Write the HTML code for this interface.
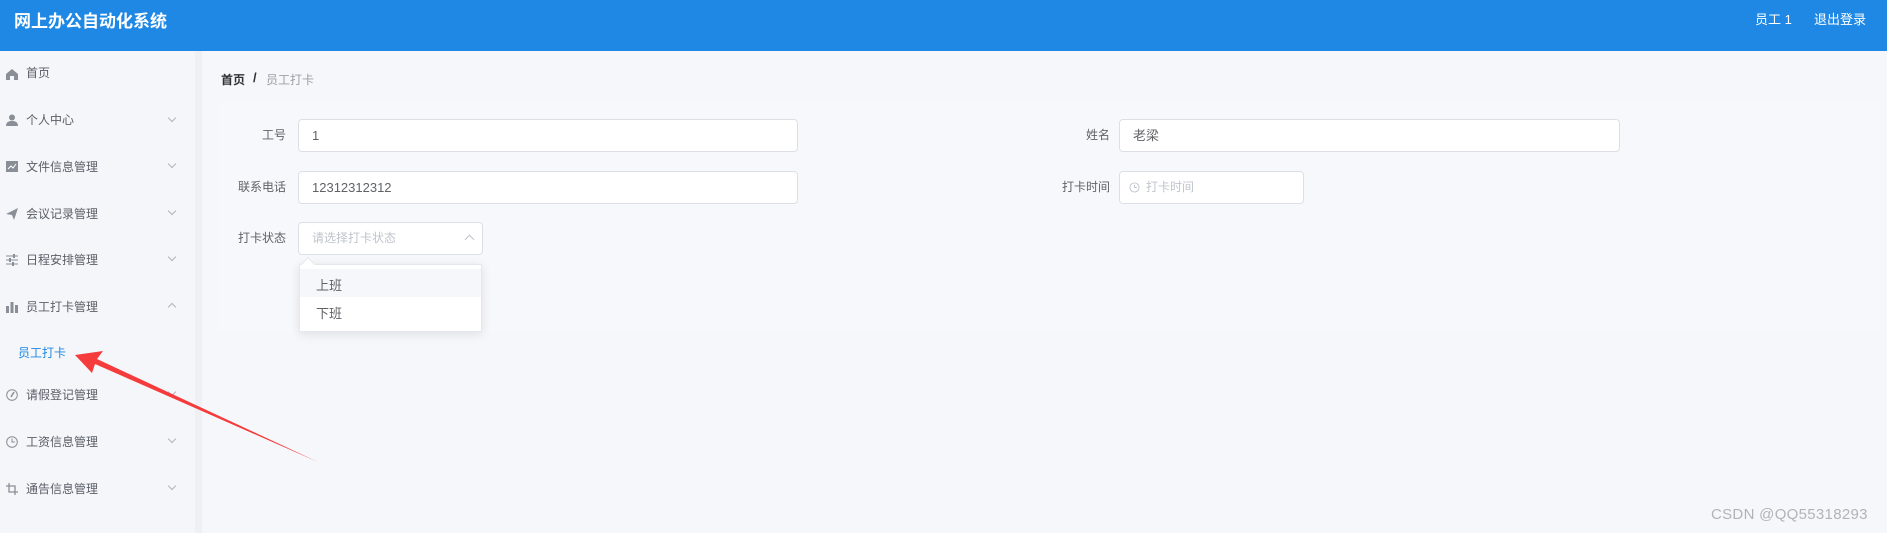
<!DOCTYPE html>
<html><head><meta charset="utf-8"><style>
*{margin:0;padding:0;box-sizing:border-box}
body{width:1887px;height:533px;overflow:hidden;background:#f6f7fb;font-family:"Liberation Sans","Noto Sans CJK SC",sans-serif;position:relative;color:#606266}
.hd{position:absolute;left:0;top:0;width:1887px;height:51px;background:#1e88e4}
.t{position:absolute;left:14px;top:7px;font-size:17px;font-weight:bold;color:#fff}
.hr{position:absolute;top:8px;color:#fff;font-size:13px}
.sb{position:absolute;left:0;top:51px;width:195px;height:482px;background:#f4f6fa}
.sg{position:absolute;left:195px;top:51px;width:7px;height:482px;background:#eef0f3}
.mi{position:absolute;left:26px;font-size:12px;color:#5a5e66;line-height:16px}
.ic{position:absolute;left:6px;width:12px;height:12px}
.ch{position:absolute;left:169px;width:6px;height:6px;border-right:1px solid #b0b4bb;border-bottom:1px solid #b0b4bb;transform:rotate(45deg)}
.lb{position:absolute;font-size:12px;color:#606266;text-align:right;width:80px}
.in{position:absolute;background:#fff;border:1px solid #dcdfe6;border-radius:4px;height:33px;font-size:13px;color:#606266;padding-left:13px;line-height:31px}
</style></head><body>
<div class="hd"></div>
<div class="t">网上办公自动化系统</div>
<div class="hr" style="left:1755px;top:9px">员工 1</div>
<div class="hr" style="left:1814px;top:9px">退出登录</div>
<div class="sb"></div><div class="sg"></div>
<svg class="ic" style="top:68px" viewBox="0 0 12 12"><path d="M0 6L6 1L12 6V12H8V8H4V12H0Z" fill="#8a8e96"/></svg>
<div class="mi" style="top:65px">首页</div>
<svg class="ic" style="top:114px" viewBox="0 0 12 12"><circle cx="6" cy="3.5" r="3" fill="#8a8e96"/><path d="M0 12C0 8 3 7 6 7S12 8 12 12Z" fill="#8a8e96"/></svg>
<div class="mi" style="top:112px">个人中心</div><div class="ch" style="top:115px"></div>
<svg class="ic" style="top:161px" viewBox="0 0 12 12"><rect width="12" height="11" fill="#8a8e96"/><path d="M2 8L5 5L7 7L10 3" stroke="#fff" fill="none"/></svg>
<div class="mi" style="top:159px">文件信息管理</div><div class="ch" style="top:161px"></div>
<svg class="ic" style="top:208px" viewBox="0 0 12 12"><path d="M0 6L12 0L8 12L6 7Z" fill="#8a8e96"/></svg>
<div class="mi" style="top:206px">会议记录管理</div><div class="ch" style="top:208px"></div>
<svg class="ic" style="top:254px" viewBox="0 0 12 12"><path d="M0 2H12M0 6H12M0 10H12" stroke="#8a8e96"/><rect x="7" y="0" width="2" height="4" fill="#8a8e96"/><rect x="3" y="4" width="2" height="4" fill="#8a8e96"/><rect x="6" y="8" width="2" height="4" fill="#8a8e96"/></svg>
<div class="mi" style="top:252px">日程安排管理</div><div class="ch" style="top:254px"></div>
<svg class="ic" style="top:301px" viewBox="0 0 12 12"><rect x="0" y="5" width="3" height="7" fill="#8a8e96"/><rect x="4.5" y="1" width="3" height="11" fill="#8a8e96"/><rect x="9" y="4" width="3" height="8" fill="#8a8e96"/></svg>
<div class="mi" style="top:299px">员工打卡管理</div><div class="ch" style="top:304px;transform:rotate(225deg)"></div>
<div class="mi" style="top:345px;left:18px;color:#1e88e4">员工打卡</div>
<svg class="ic" style="top:389px" viewBox="0 0 12 12"><circle cx="6" cy="6" r="5.3" stroke="#8a8e96" fill="none"/><path d="M8 3L5 8" stroke="#8a8e96" stroke-width="1.5"/></svg>
<div class="mi" style="top:387px">请假登记管理</div><div class="ch" style="top:389px"></div>
<svg class="ic" style="top:436px" viewBox="0 0 12 12"><circle cx="6" cy="6" r="5.3" stroke="#8a8e96" fill="none"/><path d="M6 2.5V6H9" stroke="#8a8e96" fill="none"/></svg>
<div class="mi" style="top:434px">工资信息管理</div><div class="ch" style="top:436px"></div>
<svg class="ic" style="top:483px" viewBox="0 0 12 12"><path d="M3 0V9H12M0 3H9V12" stroke="#8a8e96" fill="none" stroke-width="1.3"/></svg>
<div class="mi" style="top:481px">通告信息管理</div><div class="ch" style="top:483px"></div>
<div style="position:absolute;left:221px;top:71px;font-size:12px;color:#303133;font-weight:bold">首页</div>
<div style="position:absolute;left:253px;top:70px;font-size:13px;color:#303133;font-weight:bold">/</div>
<div style="position:absolute;left:266px;top:71px;font-size:12px;color:#9aa0a8">员工打卡</div>
<div style="position:absolute;left:219px;top:102px;width:1660px;height:230px;background:#f7f8fb"></div>
<div class="lb" style="left:206px;top:126px">工号</div>
<div class="in" style="left:298px;top:119px;width:500px">1</div>
<div class="lb" style="left:1030px;top:126px">姓名</div>
<div class="in" style="left:1119px;top:119px;width:501px">老梁</div>
<div class="lb" style="left:206px;top:178px">联系电话</div>
<div class="in" style="left:298px;top:171px;width:500px">12312312312</div>
<div class="lb" style="left:1030px;top:178px">打卡时间</div>
<div class="in" style="left:1119px;top:171px;width:185px;color:#c0c4cc;padding-left:26px;font-size:12px">打卡时间</div>
<svg style="position:absolute;left:1129px;top:182px" width="11" height="11" viewBox="0 0 12 12"><circle cx="6" cy="6" r="5" stroke="#c0c4cc" fill="none"/><path d="M6 3V6H8.5" stroke="#c0c4cc" fill="none"/></svg>
<div class="lb" style="left:206px;top:229px">打卡状态</div>
<div class="in" style="left:298px;top:222px;width:185px;color:#c0c4cc;font-size:12px">请选择打卡状态</div>
<div style="position:absolute;left:466px;top:236px;width:7px;height:7px;border-left:1px solid #c0c4cc;border-top:1px solid #c0c4cc;transform:rotate(45deg)"></div>
<div style="position:absolute;left:299px;top:264px;width:183px;height:68px;background:#fff;border:1px solid #e4e7ed;box-shadow:0 2px 10px rgba(0,0,0,.1)"></div>
<div style="position:absolute;left:303px;top:259px;width:10px;height:10px;background:#fff;border-left:1px solid #e4e7ed;border-top:1px solid #e4e7ed;transform:rotate(45deg)"></div>
<div style="position:absolute;left:300px;top:269px;width:181px;height:28px;background:#f5f7fa"></div>
<div style="position:absolute;left:316px;top:275px;font-size:13px;color:#606266">上班</div>
<div style="position:absolute;left:316px;top:303px;font-size:13px;color:#606266">下班</div>
<svg style="position:absolute;left:0;top:0" width="400" height="533"><path d="M75 355L103 351L97 359L318 462L95 364L92 373Z" fill="#f53b3b"/></svg>
<div style="position:absolute;left:1711px;top:506px;font-size:15px;color:#b0b3b8;letter-spacing:.3px">CSDN @QQ55318293</div>
</body></html>
